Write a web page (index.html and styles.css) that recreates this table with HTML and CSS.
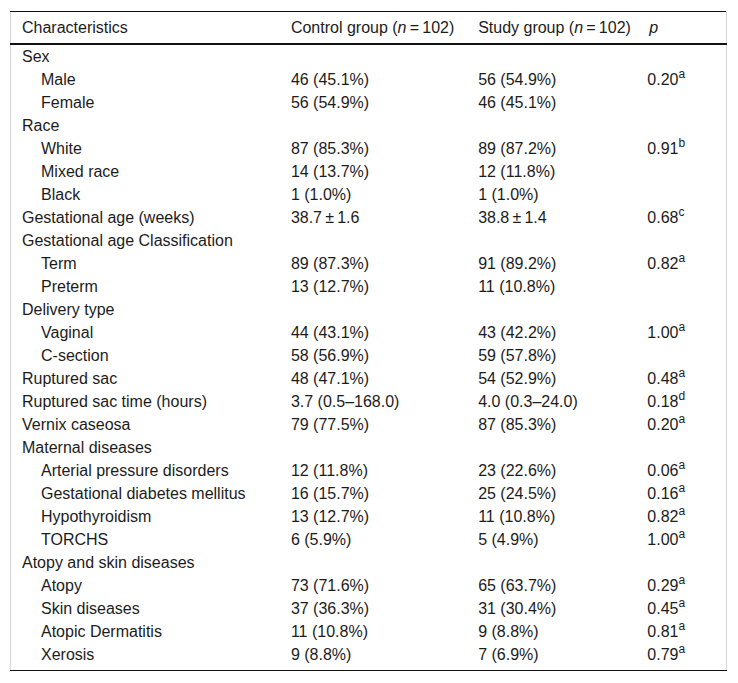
FILE: index.html
```html
<!DOCTYPE html>
<html lang="en">
<head>
<meta charset="utf-8">
<title>Characteristics table</title>
<link rel="stylesheet" href="styles.css">
</head>
<body>
<div class="wrap">
<table class="data">
  <colgroup>
    <col class="c1"><col class="c2"><col class="c3"><col class="c4">
  </colgroup>
  <thead>
    <tr>
      <th>Characteristics</th>
      <th>Control group (<i>n</i>&thinsp;=&thinsp;102)</th>
      <th>Study group (<i>n</i>&thinsp;=&thinsp;102)</th>
      <th class="pcol"><i>p</i></th>
    </tr>
  </thead>
  <tbody>
    <tr class="first"><td>Sex</td><td></td><td></td><td></td></tr>
    <tr><td class="sub">Male</td><td>46 (45.1%)</td><td>56 (54.9%)</td><td>0.20<sup>a</sup></td></tr>
    <tr><td class="sub">Female</td><td>56 (54.9%)</td><td>46 (45.1%)</td><td></td></tr>
    <tr><td>Race</td><td></td><td></td><td></td></tr>
    <tr><td class="sub">White</td><td>87 (85.3%)</td><td>89 (87.2%)</td><td>0.91<sup>b</sup></td></tr>
    <tr><td class="sub">Mixed race</td><td>14 (13.7%)</td><td>12 (11.8%)</td><td></td></tr>
    <tr><td class="sub">Black</td><td>1 (1.0%)</td><td>1 (1.0%)</td><td></td></tr>
    <tr><td>Gestational age (weeks)</td><td>38.7&thinsp;±&thinsp;1.6</td><td>38.8&thinsp;±&thinsp;1.4</td><td>0.68<sup>c</sup></td></tr>
    <tr><td>Gestational age Classification</td><td></td><td></td><td></td></tr>
    <tr><td class="sub">Term</td><td>89 (87.3%)</td><td>91 (89.2%)</td><td>0.82<sup>a</sup></td></tr>
    <tr><td class="sub">Preterm</td><td>13 (12.7%)</td><td>11 (10.8%)</td><td></td></tr>
    <tr><td>Delivery type</td><td></td><td></td><td></td></tr>
    <tr><td class="sub">Vaginal</td><td>44 (43.1%)</td><td>43 (42.2%)</td><td>1.00<sup>a</sup></td></tr>
    <tr><td class="sub">C-section</td><td>58 (56.9%)</td><td>59 (57.8%)</td><td></td></tr>
    <tr><td>Ruptured sac</td><td>48 (47.1%)</td><td>54 (52.9%)</td><td>0.48<sup>a</sup></td></tr>
    <tr><td>Ruptured sac time (hours)</td><td>3.7 (0.5–168.0)</td><td>4.0 (0.3–24.0)</td><td>0.18<sup>d</sup></td></tr>
    <tr><td>Vernix caseosa</td><td>79 (77.5%)</td><td>87 (85.3%)</td><td>0.20<sup>a</sup></td></tr>
    <tr><td>Maternal diseases</td><td></td><td></td><td></td></tr>
    <tr><td class="sub">Arterial pressure disorders</td><td>12 (11.8%)</td><td>23 (22.6%)</td><td>0.06<sup>a</sup></td></tr>
    <tr><td class="sub">Gestational diabetes mellitus</td><td>16 (15.7%)</td><td>25 (24.5%)</td><td>0.16<sup>a</sup></td></tr>
    <tr><td class="sub">Hypothyroidism</td><td>13 (12.7%)</td><td>11 (10.8%)</td><td>0.82<sup>a</sup></td></tr>
    <tr><td class="sub">TORCHS</td><td>6 (5.9%)</td><td>5 (4.9%)</td><td>1.00<sup>a</sup></td></tr>
    <tr><td>Atopy and skin diseases</td><td></td><td></td><td></td></tr>
    <tr><td class="sub">Atopy</td><td>73 (71.6%)</td><td>65 (63.7%)</td><td>0.29<sup>a</sup></td></tr>
    <tr><td class="sub">Skin diseases</td><td>37 (36.3%)</td><td>31 (30.4%)</td><td>0.45<sup>a</sup></td></tr>
    <tr><td class="sub">Atopic Dermatitis</td><td>11 (10.8%)</td><td>9 (8.8%)</td><td>0.81<sup>a</sup></td></tr>
    <tr class="last"><td class="sub">Xerosis</td><td>9 (8.8%)</td><td>7 (6.9%)</td><td>0.79<sup>a</sup></td></tr>
  </tbody>
</table>
</div>
</body>
</html>
```

FILE: styles.css
```css
html, body {
  margin: 0;
  padding: 0;
  background: #ffffff;
}

body {
  font-family: "Liberation Sans", Arial, sans-serif;
  font-size: 16px;
  color: #1c1c1c;
}

.wrap {
  padding: 11px 0 0 10px;
}

.data {
  border-collapse: collapse;
  table-layout: fixed;
  width: 717px;
  border-left: 1px solid #d6d6d6;
  border-right: 1px solid #d6d6d6;
  border-top: 1px solid #111111;
  border-bottom: 1px solid #111111;
}

.c1 { width: 269px; }
.c2 { width: 187px; }
.c3 { width: 169px; }
.c4 { width: 90px; }

.data th {
  font-weight: normal;
  text-align: left;
  line-height: 19px;
  padding: 6px 0 6px 11px;
  border-bottom: 2px solid #111111;
  white-space: nowrap;
}

.data th.pcol {
  padding-left: 13px;
}

.data td {
  line-height: 19px;
  height: 19px;
  padding: 2px 0 2px 11px;
  white-space: nowrap;
  vertical-align: top;
}

.data td.sub {
  padding-left: 30px;
}

.data tr.last td {
  padding-bottom: 6px;
}

.data sup {
  font-size: 12px;
  line-height: 0;
  vertical-align: 7px;
}
```
